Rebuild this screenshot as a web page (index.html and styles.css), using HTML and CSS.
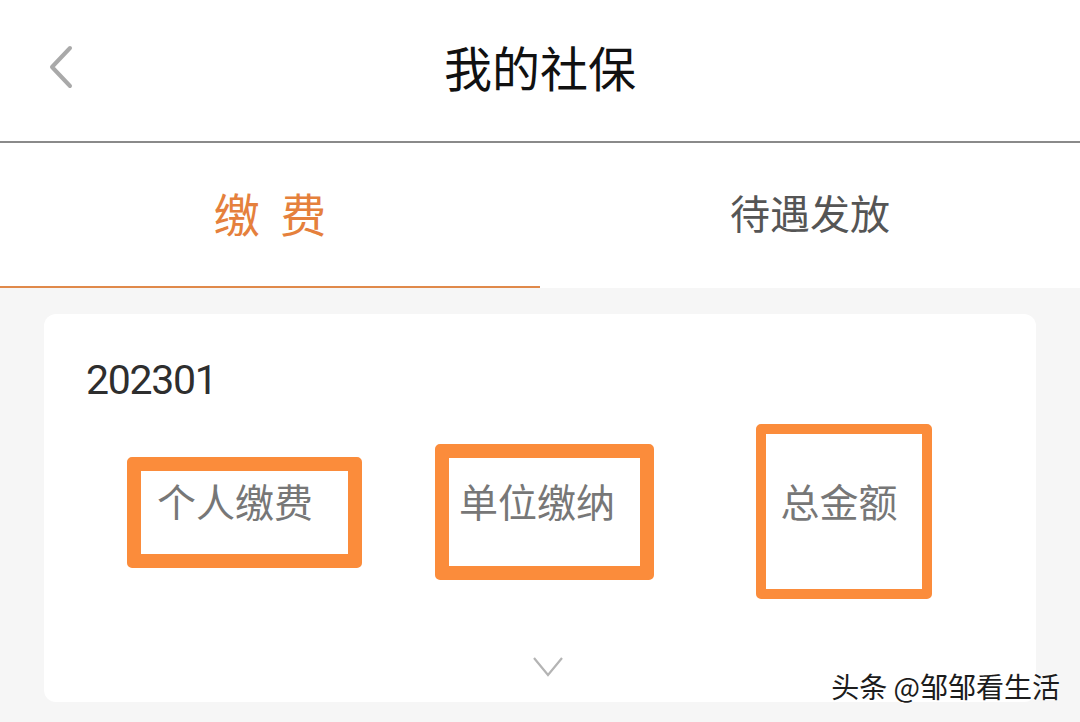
FILE: index.html
```html
<!DOCTYPE html>
<html lang="zh-CN">
<head>
  <meta charset="UTF-8" />
  <meta name="viewport" content="width=device-width, initial-scale=1.0" />
  <title>我的社保</title>
  <link rel="stylesheet" href="styles.css">
</head>
<body>
  <div class="page">
    <header class="topbar">
      <div class="back">
        <svg width="32" height="44" viewBox="0 0 32 44"><path d="M26 3 L8 22 L26 41" fill="none" stroke="#a9a9a9" stroke-width="4" stroke-linecap="round" stroke-linejoin="round"/></svg>
      </div>
      <h1>我的社保</h1>
      <div></div>
    </header>

    <nav class="tabs">
      <div class="tab active">缴 费</div>
      <div class="tab">待遇发放</div>
    </nav>

    <main class="content">
      <section class="card">
        <div class="month">202301</div>
        <div class="items">
          <div class="item">个人缴费</div>
          <div class="item">单位缴纳</div>
          <div class="item">总金额</div>
        </div>
        <div class="more">
          <svg width="34" height="24" viewBox="0 0 34 24"><path d="M3 3 L17 20 L31 3" fill="none" stroke="#b4b4b4" stroke-width="2.2"/></svg>
        </div>

        <!-- highlight marks drawn over the screenshot -->
        <div class="mark mark-1"></div>
        <div class="mark mark-2"></div>
        <div class="mark mark-3"></div>
      </section>
    </main>

    <div class="watermark">头条 @邹邹看生活</div>
  </div>
</body>
</html>
```

FILE: styles.css
```css
* {
  box-sizing: border-box;
  font-family: "Noto Sans CJK SC", "Noto Sans", sans-serif;
}
body {
  margin: 0;
  background: #f6f6f6;
}
.page {
  position: relative;
  width: 1080px;
  min-height: 722px;
  overflow: hidden;
}
.topbar {
  display: grid;
  grid-template-columns: 1fr auto 1fr;
  align-items: center;
  height: 143px;
  padding: 0 44px 10px;
  background: #fff;
  border-bottom: 2px solid #8a8a8a;
}
.back {
  display: flex;
  align-items: center;
  height: 44px;
  margin-top: 2px;
}
.topbar h1 {
  margin: 0;
  font-size: 48px;
  font-weight: 400;
  color: #111;
  line-height: 60px;
}
.tabs {
  display: grid;
  grid-template-columns: 1fr 1fr;
  height: 145px;
  background: #fff;
}
.tab {
  display: flex;
  align-items: center;
  justify-content: center;
  padding-bottom: 6px;
  font-size: 40px;
  color: #555;
  border-bottom: 2px solid transparent;
}
.tab.active {
  font-size: 46px;
  word-spacing: 10px;
  color: #e5803c;
  border-bottom-color: #e0894a;
}
.content {
  padding: 26px 44px 0;
}
.card {
  position: relative;
  height: 388px;
  padding: 42px 0 0;
  background: #fff;
  border-radius: 12px;
}
.month {
  padding-left: 42px;
  font-family: Roboto, "Liberation Sans", sans-serif;
  font-size: 41px;
  line-height: 48px;
  letter-spacing: -1.3px;
  color: #2e2e2e;
}
.items {
  display: grid;
  grid-template-columns: repeat(3, 302px);
  margin: 76px 0 0 40px;
}
.item {
  text-align: center;
  font-size: 39px;
  line-height: 40px;
  color: #777;
}
.more {
  display: flex;
  justify-content: center;
  padding-left: 16px;
  margin-top: 135px;
}
.mark {
  position: absolute;
  border: 14px solid #fb8c3b;
  border-radius: 5px;
}
.mark-1 {
  left: 83px;
  top: 143px;
  width: 235px;
  height: 111px;
}
.mark-2 {
  left: 391px;
  top: 130px;
  width: 219px;
  height: 136px;
}
.mark-3 {
  left: 712px;
  top: 110px;
  width: 176px;
  height: 175px;
  border-width: 10px;
}
.watermark {
  position: absolute;
  top: 668px;
  right: 20px;
  font-size: 28px;
  line-height: 36px;
  color: #1c1c1c;
  text-shadow: 0 0 3px #fff, 0 0 3px #fff;
}
```
